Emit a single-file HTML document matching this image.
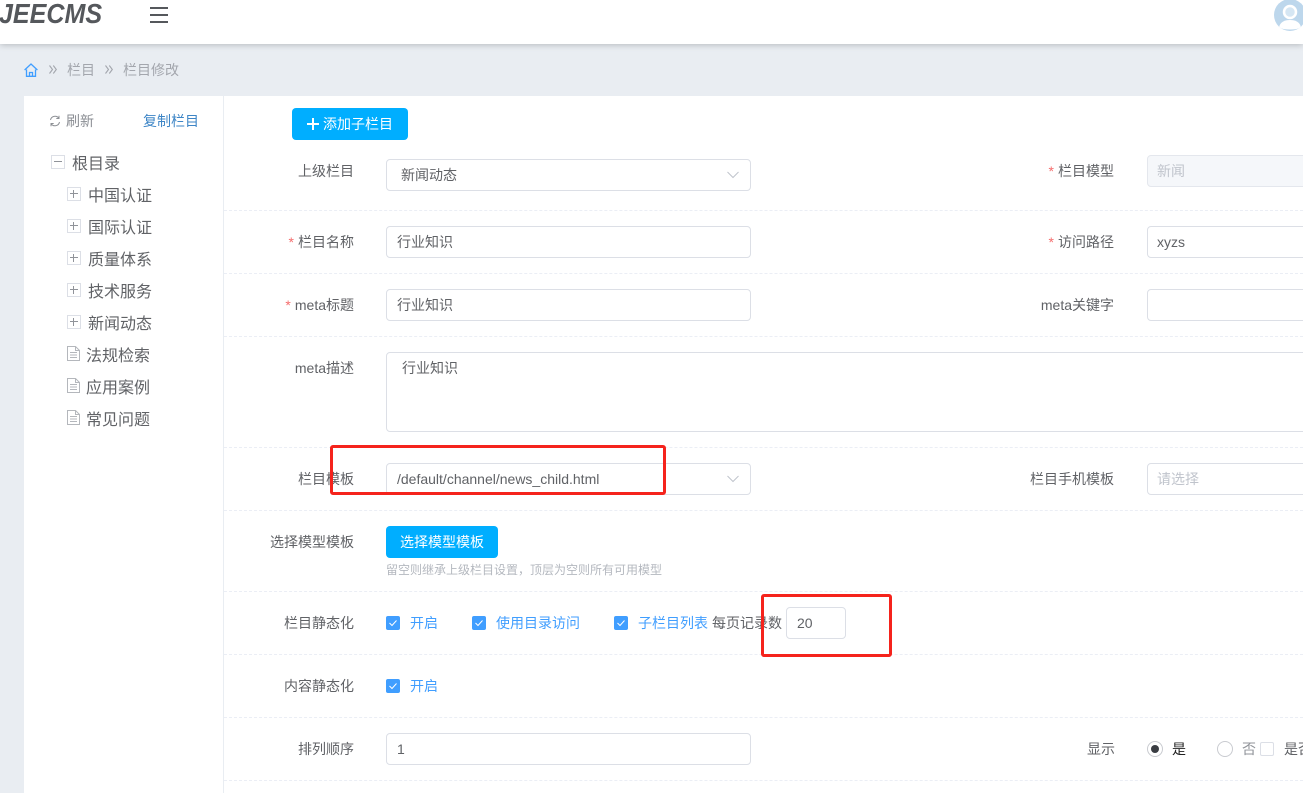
<!DOCTYPE html>
<html lang="zh">
<head>
<meta charset="utf-8">
<title>JEECMS</title>
<style>
html,body{margin:0;padding:0;width:1303px;height:793px;overflow:hidden;background:#e9edf2}
body{position:relative;font-family:"Liberation Sans","Noto Sans CJK SC",sans-serif;font-size:14px;color:#606266}
.a,.t,.l,.b,.i,.d{position:absolute;box-sizing:border-box;white-space:nowrap}
.t{line-height:20px;height:20px}
.l{width:110px;text-align:right;line-height:20px;height:20px;color:#606266;left:244px}
.l.r{left:1004px}
.star{color:#f56c6c;margin-right:4px;font-size:14px}
.i{height:32px;border:1px solid #dcdfe6;border-radius:4px;background:#fff;line-height:30px;color:#606266;overflow:hidden}
.d{left:224px;width:1079px;height:0;border-top:1px dashed #ebeef5}
.b{background:#00aeff;color:#fff;border-radius:4px;text-align:center;line-height:32px;height:32px}
.tree{font-size:16px;color:#606266;height:22px;line-height:22px}
.exp{position:absolute;width:14px;height:14px;border:1px solid #dcdfe6;box-sizing:border-box;background:#fff}
.exp:before{content:"";position:absolute;left:2px;top:5px;width:8px;height:1px;background:#909399}
.exp.p:after{content:"";position:absolute;left:5px;top:2px;width:1px;height:8px;background:#909399}
.ck{position:absolute;width:14px;height:14px;background:#409eff;border-radius:2px}
.blue{color:#409eff}
</style>
</head>
<body>
<!-- header -->
<div class="a" style="left:0;top:0;width:1303px;height:44px;background:#fff;box-shadow:0 1px 6px rgba(0,0,0,.22);z-index:3"></div>
<div class="t" style="left:-1px;top:-2px;height:32px;line-height:32px;font-size:28px;font-weight:bold;font-style:italic;color:#55585c;transform:scaleX(.895);transform-origin:0 0;z-index:4">JEECMS</div>
<div class="a" style="left:150px;top:7px;width:18px;height:2px;background:#55585c;z-index:4"></div>
<div class="a" style="left:150px;top:14px;width:18px;height:2px;background:#55585c;z-index:4"></div>
<div class="a" style="left:150px;top:21px;width:18px;height:2px;background:#55585c;z-index:4"></div>
<svg class="a" style="left:1274px;top:-1px;z-index:4" width="32" height="32" viewBox="0 0 32 32"><defs><clipPath id="av"><circle cx="16" cy="16" r="16"/></clipPath></defs><circle cx="16" cy="16" r="16" fill="#bdd7ec"/><g clip-path="url(#av)"><circle cx="16" cy="13" r="6" fill="#d5e6f3" stroke="#fff" stroke-width="2.500"/><path d="M5 28.500c1-5.500 5.500-7.500 11-7.500s10 2 11 7.500c-3 1.500-7 2-11 2s-8-.5-11-2z" fill="#fff"/></g></svg>

<!-- breadcrumb -->
<svg class="a" style="left:24px;top:63px" width="14" height="14" viewBox="0 0 14 14" fill="none" stroke="#409eff" stroke-width="1.300"><path d="M.6 7 7 1l6.400 6"/><path d="M2.500 6.500v6.800h9V6.500"/><path d="M5.500 13V9.500h3V13"/></svg>
<svg class="a" style="left:49px;top:65px" width="8" height="9" viewBox="0 0 8 9" fill="none" stroke="#a3a6ad" stroke-width="1.100"><path d="M.5.500l3 4-3 4M4.300.500l3 4-3 4"/></svg>
<div class="t" style="left:67px;top:60px;color:#a3a6ad">栏目</div>
<svg class="a" style="left:105px;top:65px" width="8" height="9" viewBox="0 0 8 9" fill="none" stroke="#a3a6ad" stroke-width="1.100"><path d="M.5.500l3 4-3 4M4.300.500l3 4-3 4"/></svg>
<div class="t" style="left:123px;top:60px;color:#a3a6ad">栏目修改</div>

<!-- panels -->
<div class="a" style="left:24px;top:96px;width:199px;height:697px;background:#fff"></div>
<div class="a" style="left:224px;top:96px;width:1079px;height:697px;background:#fff"></div>

<!-- sidebar -->
<svg class="a" style="left:49px;top:115px" width="12" height="12" viewBox="0 0 12 12" fill="none" stroke="#8d9095" stroke-width="1"><path d="M1.500 5A4.600 4.600 0 0 1 9.800 3.200M10.500 7A4.600 4.600 0 0 1 2.200 8.800"/><path d="M10 .8v2.700H7.300M2 11.200V8.500h2.700"/></svg>
<div class="t" style="left:66px;top:111px;font-size:14px;color:#8a8d93">刷新</div>
<div class="t" style="left:143px;top:111px;font-size:14px;color:#3d85c6">复制栏目</div>

<div class="exp" style="left:51px;top:155px"></div>
<div class="t tree" style="left:72px;top:154px">根目录</div>
<div class="exp p" style="left:67px;top:187px"></div>
<div class="t tree" style="left:88px;top:186px">中国认证</div>
<div class="exp p" style="left:67px;top:219px"></div>
<div class="t tree" style="left:88px;top:218px">国际认证</div>
<div class="exp p" style="left:67px;top:251px"></div>
<div class="t tree" style="left:88px;top:250px">质量体系</div>
<div class="exp p" style="left:67px;top:283px"></div>
<div class="t tree" style="left:88px;top:282px">技术服务</div>
<div class="exp p" style="left:67px;top:315px"></div>
<div class="t tree" style="left:88px;top:314px">新闻动态</div>

<svg class="a" style="left:67px;top:346px" width="13" height="15" viewBox="0 0 13 15" fill="none" stroke="#b4b7bc" stroke-width="1"><path d="M.5.500h8l4 4v10H.5zM8.500.500v4h4M3 6.500h7M3 9h7M3 11.500h7"/></svg>
<div class="t tree" style="left:86px;top:346px">法规检索</div>
<svg class="a" style="left:67px;top:378px" width="13" height="15" viewBox="0 0 13 15" fill="none" stroke="#b4b7bc" stroke-width="1"><path d="M.5.500h8l4 4v10H.5zM8.500.500v4h4M3 6.500h7M3 9h7M3 11.500h7"/></svg>
<div class="t tree" style="left:86px;top:378px">应用案例</div>
<svg class="a" style="left:67px;top:410px" width="13" height="15" viewBox="0 0 13 15" fill="none" stroke="#b4b7bc" stroke-width="1"><path d="M.5.500h8l4 4v10H.5zM8.500.500v4h4M3 6.500h7M3 9h7M3 11.500h7"/></svg>
<div class="t tree" style="left:86px;top:410px">常见问题</div>

<!-- add button -->
<div class="b" style="left:292px;top:108px;width:116px"></div>
<div class="a" style="left:307px;top:123px;width:12px;height:2px;background:#fff"></div>
<div class="a" style="left:312px;top:118px;width:2px;height:12px;background:#fff"></div>
<div class="t" style="left:323px;top:114px;color:#fff">添加子栏目</div>

<!-- row 1 -->
<div class="l" style="top:161px">上级栏目</div>
<div class="i" style="left:386px;top:159px;width:365px;padding-left:14px">新闻动态</div>
<svg class="a" style="left:727px;top:171px" width="12" height="8" viewBox="0 0 12 8" fill="none" stroke="#c0c4cc"><path d="M.5 1l5.500 5.500L11.500 1"/></svg>
<div class="l r" style="top:161px"><span class="star">*</span>栏目模型</div>
<div class="i" style="left:1147px;top:155px;width:170px;padding-left:9px;background:#f5f7fa;border-color:#e4e7ed;color:#c0c4cc">新闻</div>
<div class="d" style="top:210px"></div>

<!-- row 2 -->
<div class="l" style="top:232px"><span class="star">*</span>栏目名称</div>
<div class="i" style="left:386px;top:226px;width:365px;padding-left:10px">行业知识</div>
<div class="l r" style="top:232px"><span class="star">*</span>访问路径</div>
<div class="i" style="left:1147px;top:226px;width:170px;padding-left:9px">xyzs</div>
<div class="d" style="top:273px"></div>

<!-- row 3 -->
<div class="l" style="top:295px"><span class="star">*</span>meta标题</div>
<div class="i" style="left:386px;top:289px;width:365px;padding-left:10px">行业知识</div>
<div class="l r" style="top:295px">meta关键字</div>
<div class="i" style="left:1147px;top:289px;width:170px"></div>
<div class="d" style="top:336px"></div>

<!-- row 4 -->
<div class="l" style="top:358px">meta描述</div>
<div class="i" style="left:386px;top:352px;width:930px;height:80px;padding:0 0 0 15px;line-height:30px">行业知识</div>
<div class="d" style="top:447px"></div>

<!-- row 5 -->
<div class="l" style="top:469px">栏目模板</div>
<div class="i" style="left:386px;top:463px;width:365px;padding-left:10px">/default/channel/news_child.html</div>
<svg class="a" style="left:727px;top:475px" width="12" height="8" viewBox="0 0 12 8" fill="none" stroke="#c0c4cc"><path d="M.5 1l5.500 5.500L11.500 1"/></svg>
<div class="l r" style="top:469px">栏目手机模板</div>
<div class="i" style="left:1147px;top:463px;width:170px;padding-left:9px;color:#c0c4cc">请选择</div>
<div class="d" style="top:510px"></div>

<!-- row 6 -->
<div class="l" style="top:532px">选择模型模板</div>
<div class="b" style="left:386px;top:526px;width:112px">选择模型模板</div>
<div class="t" style="left:386px;top:560px;font-size:12px;color:#b4b8bf">留空则继承上级栏目设置，顶层为空则所有可用模型</div>
<div class="d" style="top:591px"></div>

<!-- row 7 -->
<div class="l" style="top:613px">栏目静态化</div>
<div class="ck" style="left:386px;top:616px"><svg width="14" height="14" viewBox="0 0 14 14" fill="none" stroke="#fff" stroke-width="1"><path d="M3.500 7l2.500 2.500 4.500-5"/></svg></div>
<div class="t blue" style="left:410px;top:613px">开启</div>
<div class="ck" style="left:472px;top:616px"><svg width="14" height="14" viewBox="0 0 14 14" fill="none" stroke="#fff" stroke-width="1"><path d="M3.500 7l2.500 2.500 4.500-5"/></svg></div>
<div class="t blue" style="left:496px;top:613px">使用目录访问</div>
<div class="ck" style="left:614px;top:616px"><svg width="14" height="14" viewBox="0 0 14 14" fill="none" stroke="#fff" stroke-width="1"><path d="M3.500 7l2.500 2.500 4.500-5"/></svg></div>
<div class="t blue" style="left:638px;top:613px">子栏目列表</div>
<div class="t" style="left:712px;top:613px">每页记录数</div>
<div class="i" style="left:786px;top:607px;width:60px;padding-left:10px">20</div>
<div class="d" style="top:654px"></div>

<!-- row 8 -->
<div class="l" style="top:676px">内容静态化</div>
<div class="ck" style="left:386px;top:679px"><svg width="14" height="14" viewBox="0 0 14 14" fill="none" stroke="#fff" stroke-width="1"><path d="M3.500 7l2.500 2.500 4.500-5"/></svg></div>
<div class="t blue" style="left:410px;top:676px">开启</div>
<div class="d" style="top:717px"></div>

<!-- row 9 -->
<div class="l" style="top:739px">排列顺序</div>
<div class="i" style="left:386px;top:733px;width:365px;padding-left:10px">1</div>
<div class="l" style="top:739px;left:1005px">显示</div>
<div class="a" style="left:1147px;top:741px;width:16px;height:16px;border:1px solid #c9cbd0;border-radius:50%;background:#fff"></div>
<div class="a" style="left:1151px;top:745px;width:8px;height:8px;border-radius:50%;background:#3a3d42"></div>
<div class="t" style="left:1172px;top:739px;color:#222">是</div>
<div class="a" style="left:1217px;top:741px;width:16px;height:16px;border:1px solid #c9cbd0;border-radius:50%;background:#fff"></div>
<div class="t" style="left:1242px;top:739px;color:#909399">否</div>
<div class="a" style="left:1260px;top:742px;width:14px;height:14px;border:1px solid #dcdfe6;border-radius:2px;background:#fff"></div>
<div class="t" style="left:1284px;top:739px">是否</div>
<div class="d" style="top:780px"></div>

<!-- red annotations -->
<div class="a" style="left:330px;top:445px;width:336px;height:50px;border:3px solid #f5231c;border-radius:3px;z-index:5"></div>
<div class="a" style="left:761px;top:594px;width:131px;height:63px;border:3px solid #f5231c;border-radius:3px;z-index:5"></div>
</body>
</html>
